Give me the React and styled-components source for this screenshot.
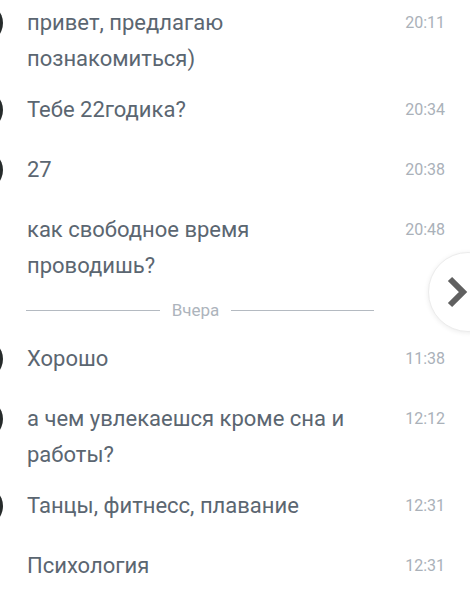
import React from 'react';
import styled, { createGlobalStyle } from 'styled-components';

const GlobalStyle = createGlobalStyle`
	html, body {
		margin: 0;
		padding: 0;
		background: #fff;
		overflow: hidden;
	}
	body {
		font-family: Roboto, "Noto Sans", "Liberation Sans", sans-serif;
		-webkit-font-smoothing: antialiased;
	}
`;

const Screen = styled.div`
	position: relative;
	width: 470px;
	height: 602px;
	overflow: hidden;
`;

const History = styled.div`
	display: flex;
	flex-direction: column;
	margin-top: -3px;
`;

const Row = styled.div`
	display: flex;
	align-items: flex-start;
	min-height: 60px;
	box-sizing: border-box;
	padding: 8px 25px 7px 0;
`;

const Avatar = styled.div`
	flex-shrink: 0;
	width: 40px;
	height: 40px;
	margin: -2px 24px 0 -37px;
	border-radius: 50%;
	background: ${p => (p.$hidden ? 'transparent' : '#262b2b')};
`;

const Text = styled.div`
	width: 330px;
	font-size: 22px;
	line-height: 36px;
	color: #5b6671;
`;

const Time = styled.div`
	margin-left: auto;
	font-size: 16px;
	line-height: 36px;
	color: #aab1b9;
`;

const Divider = styled.div`
	display: flex;
	align-items: center;
	gap: 12px;
	width: 348px;
	height: 42px;
	box-sizing: border-box;
	margin-left: 26px;
	padding-bottom: 4px;
	font-size: 17px;
	color: #adb4bc;

	&::before, &::after {
		content: '';
		flex: 134 1 0;
		height: 1px;
		background: #b4bac1;
	}
	&::after {
		flex: 143 1 0;
	}
`;

const NextButton = styled.button`
	position: absolute;
	left: 428px;
	top: 252px;
	width: 80px;
	height: 80px;
	padding: 0 0 0 18px;
	display: flex;
	align-items: center;
	border: 1px solid #ececec;
	border-radius: 50%;
	background: #fff;
	box-shadow: 0 1px 5px rgba(0, 0, 0, 0.08);
`;

const messages = [
	{ text: 'привет, предлагаю познакомиться)', time: '20:11', avatar: true },
	{ text: 'Тебе 22годика?', time: '20:34', avatar: true },
	{ text: '27', time: '20:38', avatar: true },
	{ text: 'как свободное время проводишь?', time: '20:48', avatar: false },
	{ divider: 'Вчера' },
	{ text: 'Хорошо', time: '11:38', avatar: true },
	{ text: 'а чем увлекаешся кроме сна и работы?', time: '12:12', avatar: true },
	{ text: 'Танцы, фитнесс, плавание', time: '12:31', avatar: true },
	{ text: 'Психология', time: '12:31', avatar: false },
];

export default function App() {
	return (
		<Screen>
			<GlobalStyle />
			<History>
				{messages.map((m, i) =>
					m.divider ? (
						<Divider key={i}>{m.divider}</Divider>
					) : (
						<Row key={i}>
							<Avatar $hidden={!m.avatar} />
							<Text>{m.text}</Text>
							<Time>{m.time}</Time>
						</Row>
					)
				)}
			</History>
			<NextButton aria-label="next">
				<svg width="22" height="34" viewBox="0 0 22 34">
					<polyline points="3,4 16,17 3,30" fill="none" stroke="#606060" strokeWidth="6" strokeLinejoin="miter" />
				</svg>
			</NextButton>
		</Screen>
	);
}
